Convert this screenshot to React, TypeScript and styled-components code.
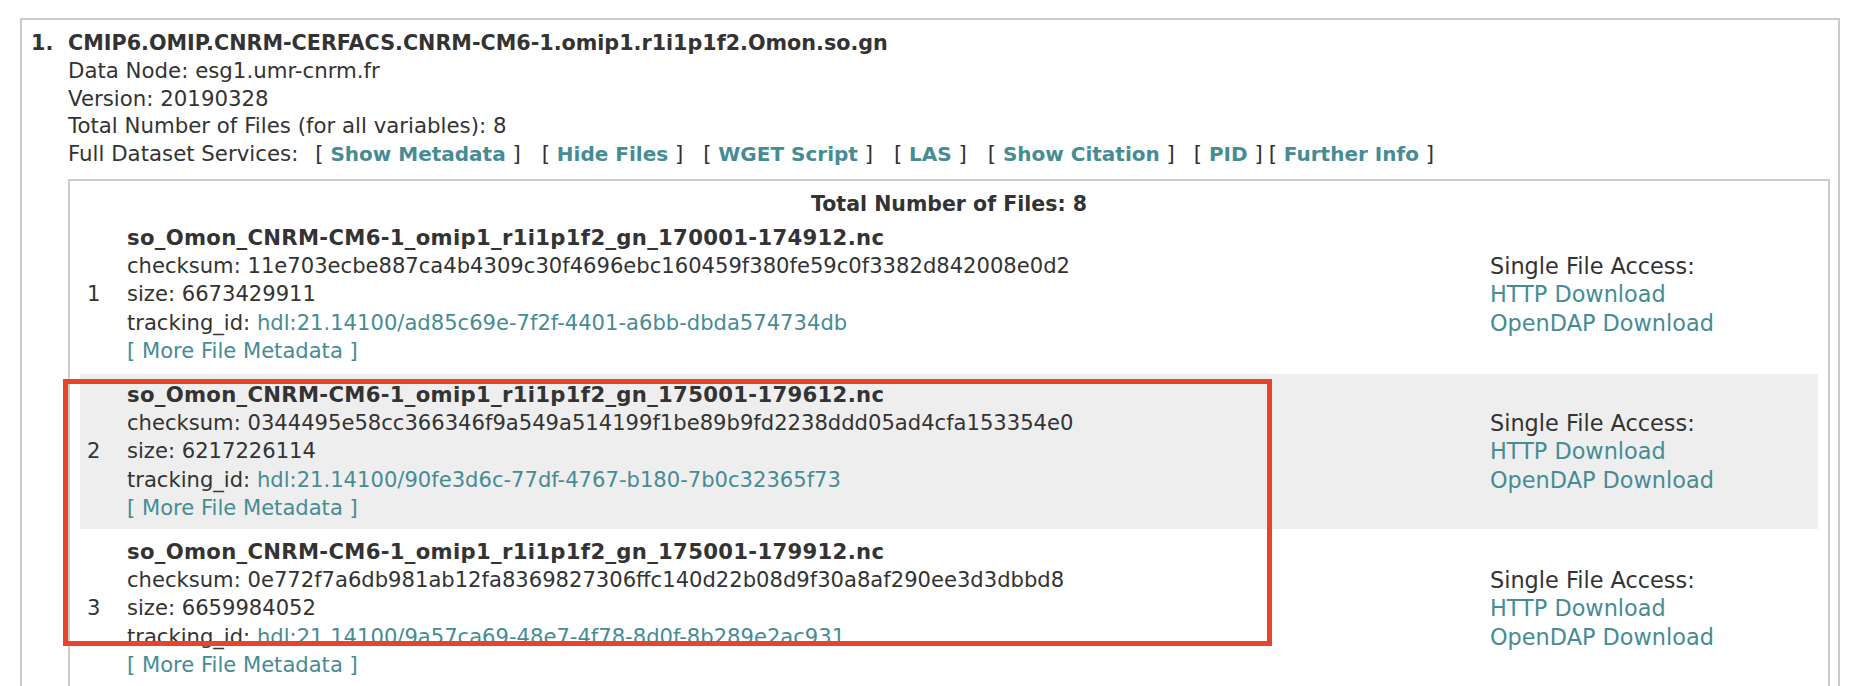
import React from "react";
import styled, { createGlobalStyle } from "styled-components";

const GlobalStyle = createGlobalStyle`
  html, body {
    margin: 0;
    padding: 0;
    background: #ffffff;
  }
  body {
    font-family: "DejaVu Sans", "Liberation Sans", Arial, sans-serif;
    font-size: 21.3px;
    color: #333333;
  }
`;

const LINK = "#468c94";

const Page = styled.div`
  position: relative;
  height: 100vh;
  overflow: hidden;
  box-sizing: border-box;
  padding: 18px 20px 0 20px;
`;

const DatasetBox = styled.div`
  border: 2px solid #cccccc;
  padding: 9.5px 8px 40px 9px;
  display: flex;
  align-items: flex-start;
`;

const ItemNumber = styled.div`
  width: 37px;
  flex: none;
  font-weight: bold;
  line-height: 27.6px;
  font-size: 20.7px;
`;

const ItemBody = styled.div`
  flex: 1;
  min-width: 0;
`;

const Line = styled.div<{ $bold?: boolean }>`
  line-height: 27.6px;
  white-space: nowrap;
  font-weight: ${(p) => (p.$bold ? "bold" : "normal")};
  font-size: ${(p) => (p.$bold ? "20.7px" : "21.3px")};
`;

const Bracket = styled.span<{ $gap: number }>`
  margin-left: ${(p) => p.$gap}px;
  white-space: pre;
`;

const ServiceLink = styled.a`
  color: ${LINK};
  font-weight: bold;
  font-size: 20px;
  text-decoration: none;
`;

const FilesBox = styled.div`
  margin-top: 10.5px;
  border: 2px solid #cccccc;
  padding: 0 10px 40px 10px;
`;

const FilesHeader = styled.div`
  text-align: center;
  font-weight: bold;
  font-size: 20.5px;
  line-height: 19.5px;
  padding-top: 14.5px;
`;

const FileList = styled.div`
  display: flex;
  flex-direction: column;
  gap: 2px;
  margin-top: 2px;
`;

const FileRow = styled.div<{ $shaded: boolean }>`
  display: grid;
  grid-template-columns: 47px 1fr 328px;
  background: ${(p) => (p.$shaded ? "#eeeeee" : "transparent")};
  padding: 7px 0;
  line-height: 28.2px;
  font-size: 21.1px;
`;

const RowNumber = styled.div`
  align-self: center;
  padding-left: 7px;
`;

const FileInfo = styled.div`
  white-space: nowrap;
`;

const FileName = styled.div`
  font-weight: bold;
  font-size: 21.2px;
  letter-spacing: 0.3px;
`;

const InfoLine = styled.div``;

const TextLink = styled.a`
  color: ${LINK};
  text-decoration: none;
`;

const Access = styled.div`
  align-self: center;
  display: flex;
  flex-direction: column;
  font-size: 22.4px;
  white-space: nowrap;
`;

const Highlight = styled.div`
  position: absolute;
  left: 63px;
  top: 379px;
  width: 1209px;
  height: 267px;
  box-sizing: border-box;
  border: 5px solid #e8432c;
  pointer-events: none;
`;

type FileEntry = {
  name: string;
  checksum: string;
  size: string;
  tracking: string;
};

const files: FileEntry[] = [
  {
    name: "so_Omon_CNRM-CM6-1_omip1_r1i1p1f2_gn_170001-174912.nc",
    checksum: "11e703ecbe887ca4b4309c30f4696ebc160459f380fe59c0f3382d842008e0d2",
    size: "6673429911",
    tracking: "hdl:21.14100/ad85c69e-7f2f-4401-a6bb-dbda574734db",
  },
  {
    name: "so_Omon_CNRM-CM6-1_omip1_r1i1p1f2_gn_175001-179612.nc",
    checksum: "0344495e58cc366346f9a549a514199f1be89b9fd2238ddd05ad4cfa153354e0",
    size: "6217226114",
    tracking: "hdl:21.14100/90fe3d6c-77df-4767-b180-7b0c32365f73",
  },
  {
    name: "so_Omon_CNRM-CM6-1_omip1_r1i1p1f2_gn_175001-179912.nc",
    checksum: "0e772f7a6db981ab12fa8369827306ffc140d22b08d9f30a8af290ee3d3dbbd8",
    size: "6659984052",
    tracking: "hdl:21.14100/9a57ca69-48e7-4f78-8d0f-8b289e2ac931",
  },
];

const services: { label: string; gap: number }[] = [
  { label: "Show Metadata", gap: 17 },
  { label: "Hide Files", gap: 21 },
  { label: "WGET Script", gap: 20 },
  { label: "LAS", gap: 21 },
  { label: "Show Citation", gap: 21 },
  { label: "PID", gap: 19 },
  { label: "Further Info", gap: 6 },
];

export default function App() {
  return (
    <>
      <GlobalStyle />
      <Page>
        <DatasetBox>
          <ItemNumber>1.</ItemNumber>
          <ItemBody>
            <Line $bold>CMIP6.OMIP.CNRM-CERFACS.CNRM-CM6-1.omip1.r1i1p1f2.Omon.so.gn</Line>
            <Line>Data Node: esg1.umr-cnrm.fr</Line>
            <Line>Version: 20190328</Line>
            <Line>Total Number of Files (for all variables): 8</Line>
            <Line>
              Full Dataset Services:
              {services.map((s) => (
                <Bracket key={s.label} $gap={s.gap}>
                  {"[ "}
                  <ServiceLink href="#">{s.label}</ServiceLink>
                  {" ]"}
                </Bracket>
              ))}
            </Line>
            <FilesBox>
              <FilesHeader>Total Number of Files: 8</FilesHeader>
              <FileList>
                {files.map((f, i) => (
                  <FileRow key={f.name} $shaded={i % 2 === 1}>
                    <RowNumber>{i + 1}</RowNumber>
                    <FileInfo>
                      <FileName>{f.name}</FileName>
                      <InfoLine>checksum: {f.checksum}</InfoLine>
                      <InfoLine>size: {f.size}</InfoLine>
                      <InfoLine>
                        tracking_id: <TextLink href="#">{f.tracking}</TextLink>
                      </InfoLine>
                      <InfoLine>
                        <TextLink href="#">[ More File Metadata ]</TextLink>
                      </InfoLine>
                    </FileInfo>
                    <Access>
                      <span>Single File Access:</span>
                      <TextLink href="#">HTTP Download</TextLink>
                      <TextLink href="#">OpenDAP Download</TextLink>
                    </Access>
                  </FileRow>
                ))}
              </FileList>
            </FilesBox>
          </ItemBody>
        </DatasetBox>
        <Highlight />
      </Page>
    </>
  );
}
